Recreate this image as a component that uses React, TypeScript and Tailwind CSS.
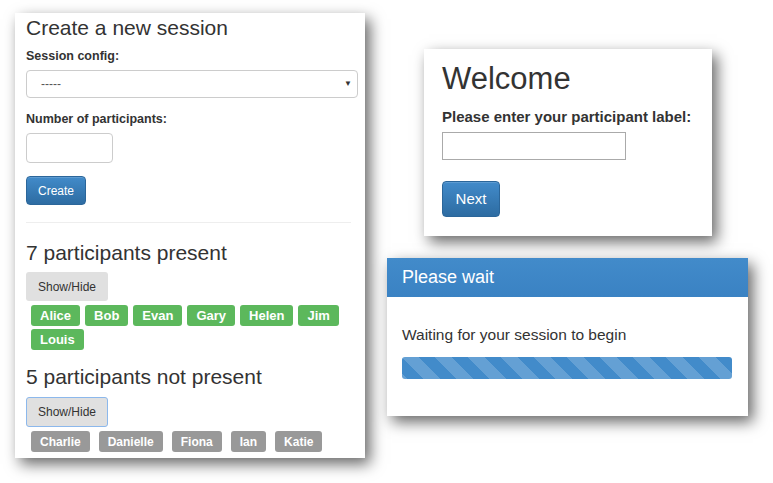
import React from 'react';

const present = ['Alice', 'Bob', 'Evan', 'Gary', 'Helen', 'Jim', 'Louis'];
const absent = ['Charlie', 'Danielle', 'Fiona', 'Ian', 'Katie'];

function BlueButton({ children, className }: { children: React.ReactNode; className: string }) {
  return (
    <button
      className={`block rounded-[4px] border border-[#2b669a] bg-linear-to-b from-[#428bca] to-[#2d6ca2] text-white shadow-[inset_0_1px_0_rgba(255,255,255,0.15)] ${className}`}
    >
      {children}
    </button>
  );
}

export default function App() {
  return (
    <div className="relative w-[773px] h-[483px] overflow-hidden bg-white text-[#333] font-['Liberation_Sans',Arial,sans-serif]">
      {/* Create session panel */}
      <div className="absolute left-[15px] top-[13px] w-[350px] h-[445px] bg-white pl-[11px] pr-[7px] pt-[3px] shadow-[5px_6px_14px_rgba(0,0,0,0.6)]">
        <h1 className="text-[21px] leading-[23px]">Create a new session</h1>

        <label className="block mt-[9px] text-[12.5px] leading-[17px] font-bold">Session config:</label>
        <div className="mt-[5px] flex h-[28px] w-[332px] items-center justify-between rounded-[4px] border border-[#ccc] pl-[14px] pr-[5px] text-[12px] text-[#555]">
          <span>-----</span>
          <span className="text-[8px] text-[#333]">▼</span>
        </div>

        <label className="block mt-[13px] text-[12.5px] leading-[17px] font-bold">Number of participants:</label>
        <div className="mt-[5px] h-[30px] w-[87px] rounded-[4px] border border-[#ccc]" />

        <BlueButton className="mt-[13px] h-[29px] w-[60px] text-[12px]">Create</BlueButton>

        <div className="mt-[17px] mr-[7px] border-t border-[#eee]" />

        <h2 className="mt-[18px] text-[21px] leading-[23px]">7 participants present</h2>
        <button className="mt-[8px] block h-[29px] w-[82px] rounded-[3px] bg-[#e0e0e0] text-[12px]">Show/Hide</button>
        <div className="mt-[4px] ml-[5px] flex flex-wrap gap-x-[5px] gap-y-[3px]">
          {present.map((name) => (
            <span
              key={name}
              className="flex h-[21px] items-center rounded-[3px] bg-[#5cb85c] px-[9px] text-[13px] font-bold text-white"
            >
              {name}
            </span>
          ))}
        </div>

        <h2 className="mt-[15px] text-[21px] leading-[23px]">5 participants not present</h2>
        <button className="mt-[9px] block h-[30px] w-[82px] rounded-[3px] border border-[#8cb8ec] bg-[#e0e0e0] text-[12px]">
          Show/Hide
        </button>
        <div className="mt-[4px] ml-[5px] flex flex-wrap gap-x-[9px] gap-y-[3px]">
          {absent.map((name) => (
            <span
              key={name}
              className="flex h-[21px] items-center rounded-[3px] bg-[#999] px-[9px] text-[12px] font-bold text-white"
            >
              {name}
            </span>
          ))}
        </div>
      </div>

      {/* Welcome panel */}
      <div className="absolute left-[424px] top-[49px] w-[288px] h-[187px] bg-white px-[18px] pt-[13px] shadow-[5px_6px_14px_rgba(0,0,0,0.6)]">
        <h1 className="text-[31px] leading-[33px]">Welcome</h1>
        <label className="block mt-[12px] text-[15px] leading-[20px] font-bold">Please enter your participant label:</label>
        <div className="mt-[5px] h-[28px] w-[184px] border border-[#aaa]" />
        <BlueButton className="mt-[21px] h-[36px] w-[58px] text-[15px]">Next</BlueButton>
      </div>

      {/* Waiting panel */}
      <div className="absolute left-[387px] top-[258px] w-[361px] h-[158px] bg-white shadow-[5px_6px_14px_rgba(0,0,0,0.6)]">
        <div className="flex h-[39px] items-center bg-linear-to-b from-[#428bca] to-[#3a82c3] px-[15px] text-[18px] text-white">
          Please wait
        </div>
        <div className="px-[15px] pt-[28px]">
          <p className="text-[15.5px] leading-[20px]">Waiting for your session to begin</p>
          <div className="mt-[12px] h-[22px] w-[330px] rounded-[3px] bg-[#428bca] bg-[linear-gradient(45deg,rgba(255,255,255,0.18)_25%,transparent_25%,transparent_50%,rgba(255,255,255,0.18)_50%,rgba(255,255,255,0.18)_75%,transparent_75%,transparent)] bg-[length:33px_33px]" />
        </div>
      </div>
    </div>
  );
}
